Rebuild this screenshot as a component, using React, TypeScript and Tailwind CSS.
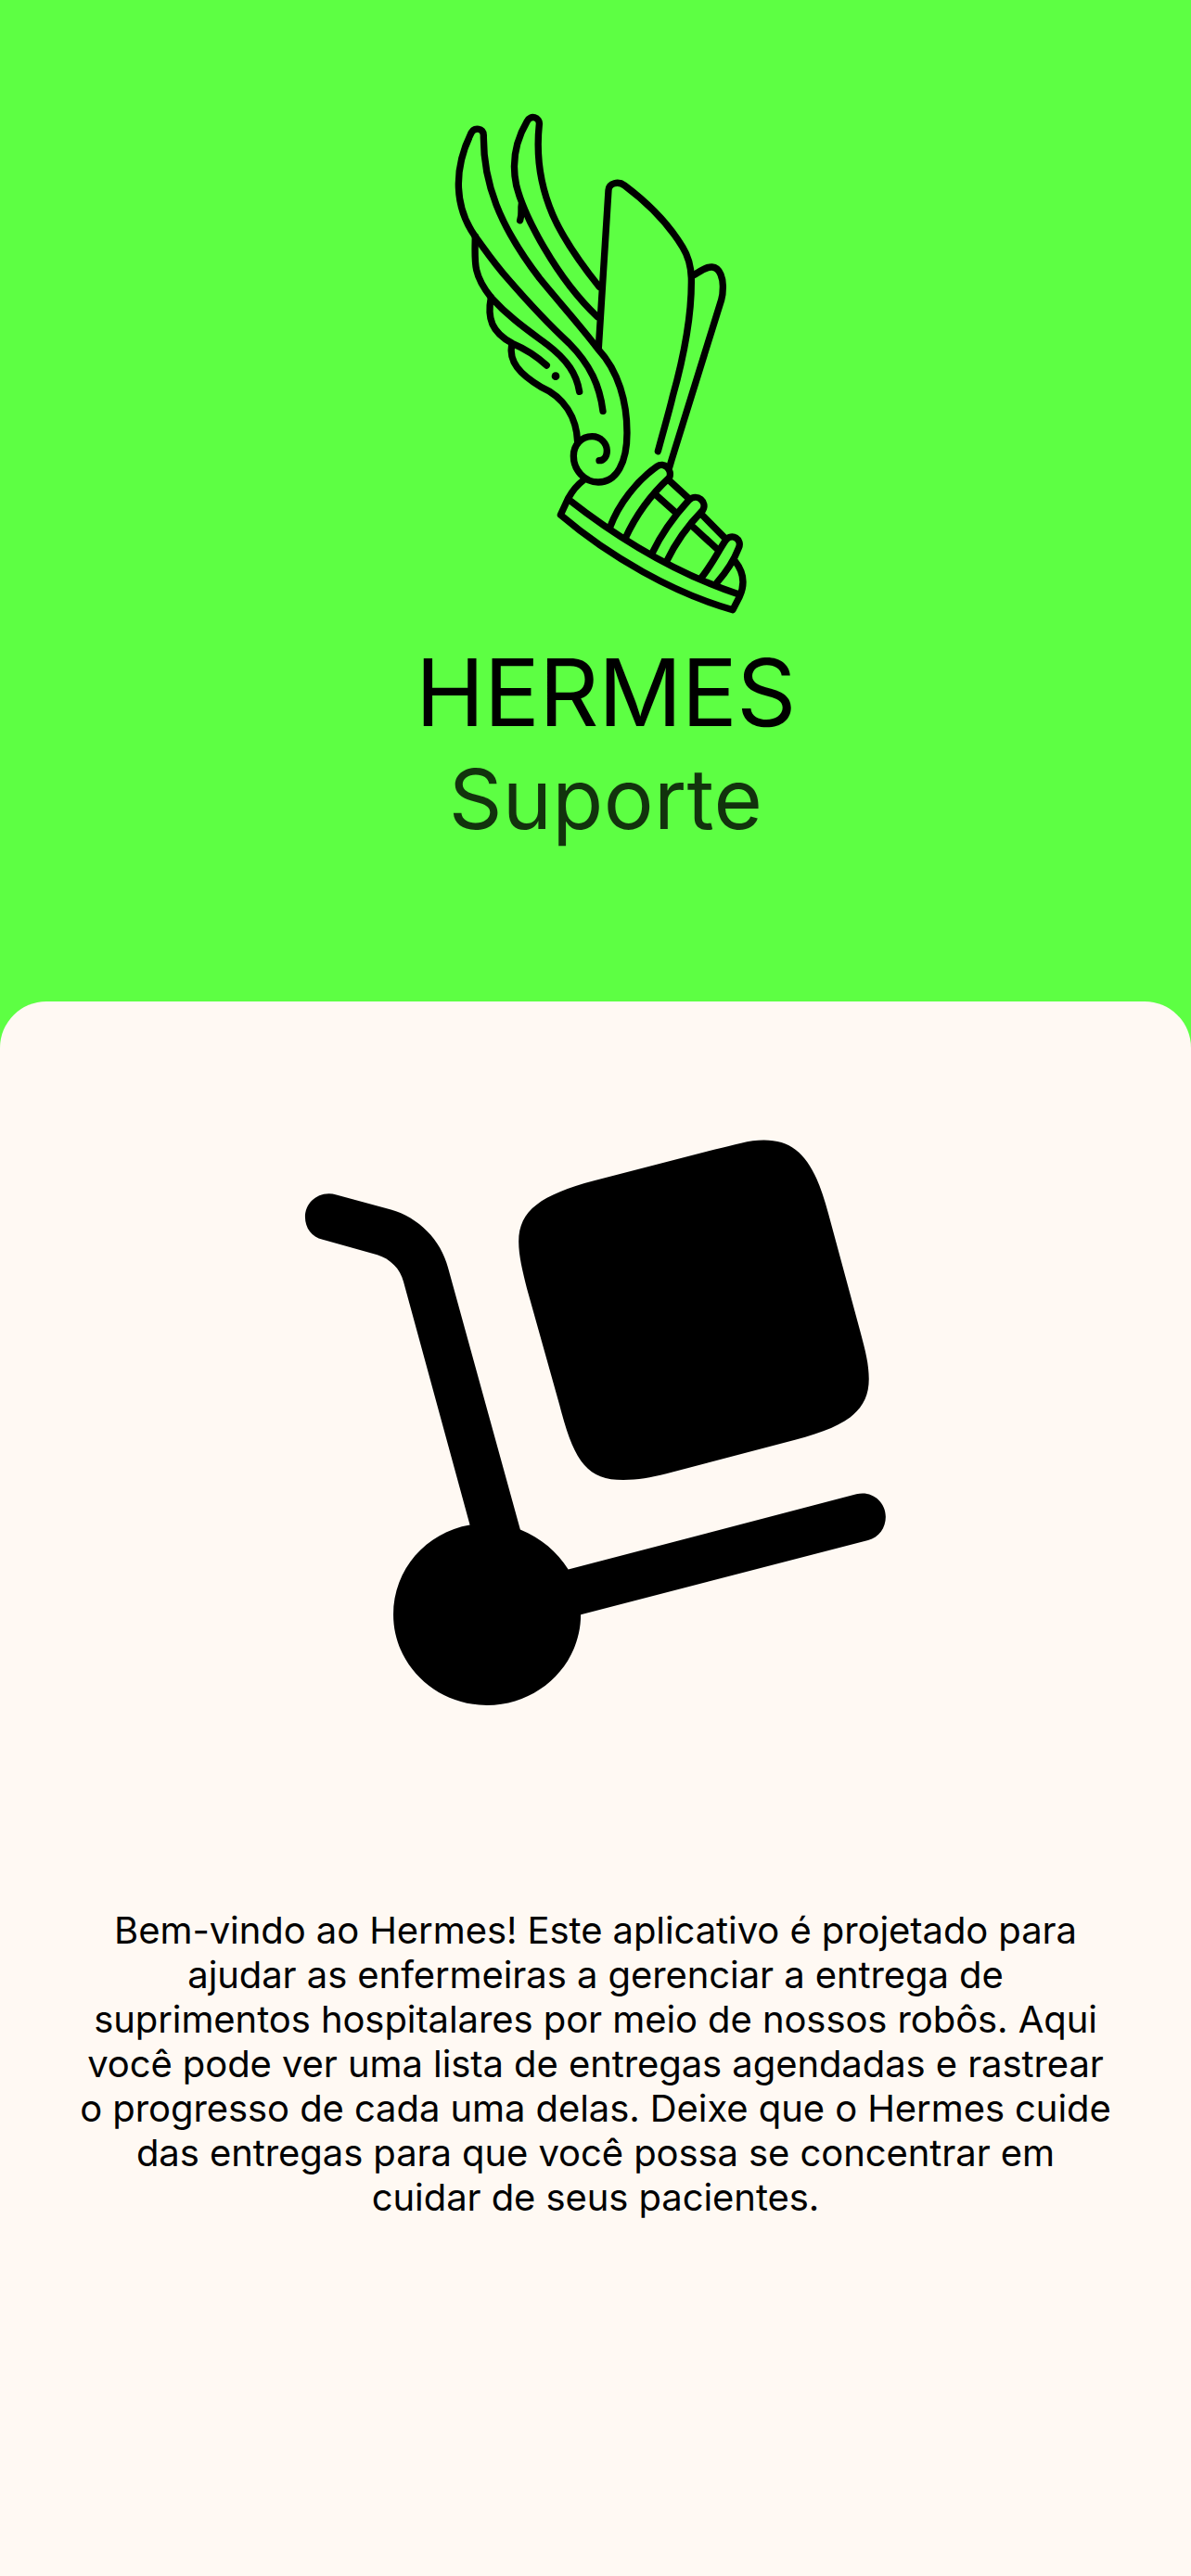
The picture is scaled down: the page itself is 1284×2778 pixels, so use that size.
function HermesLogo() {
  return (
    <svg
      className="mr-[6px] block h-[560px] w-[340px]"
      viewBox="0 0 1020 1680"
      fill="none"
      stroke="#000"
      strokeWidth="22"
      strokeLinecap="round"
      strokeLinejoin="round"
      aria-hidden="true"
    >
      {/* wing */}
      <path d="M97 435C30 340 25 220 84 100C95 80 124 85 124 107C122 260 175 400 305 570C370 650 430 715 495 800C560 870 588 970 588 1070C588 1165 555 1230 495 1230C450 1230 415 1190 415 1145C415 1110 440 1082 475 1082C503 1082 523 1105 523 1128C523 1148 512 1160 498 1160" />
      <path d="M97 435C130 480 160 525 205 575C270 650 330 715 400 780C470 850 500 920 510 1000" />
      <path d="M97 435C95 520 90 560 148 632C210 700 270 740 330 785C395 835 425 880 434 937" />
      <path d="M148 632C135 700 150 745 217 781C262 800 295 822 328 852" />
      <path d="M215 785C205 840 240 880 310 922C385 955 425 1020 428 1100" />
      <circle cx="357" cy="887" r="13" fill="#000" stroke="none" />
      <path d="M498 598C380 450 280 300 304 72C307 50 275 40 265 62C225 130 215 200 230 270C255 370 360 570 492 695" />
      <path d="M242 383C250 360 243 350 247 330L254 350" />
      {/* leg */}
      <path d="M496 795L528 285C530 262 560 255 580 270C660 330 720 390 768 470C790 505 795 540 796 570C798 700 770 830 735 955C722 1010 705 1065 688 1130" />
      <path d="M800 562C830 545 845 533 863 534C890 535 899 575 898 600C898 615 896 630 893 640L733 1155L725 1182" />
      {/* sandal */}
      <g transform="translate(330 750)">
        <path d="M118 473C95 490 80 510 68 532L43 586C200 720 410 840 600 893L622 850C640 810 635 770 607 735" />
        <path d="M68 535C240 670 430 780 620 843" />
        <path d="M202 628C230 550 290 475 355 429C378 413 405 440 395 465C330 525 285 590 252 662" />
        <path d="M338 712C375 635 415 585 458 538C485 513 520 545 502 572C455 620 415 675 385 738" />
        <path d="M500 787C530 750 555 700 577 668C597 643 632 665 619 693C603 735 575 775 548 806" />
        <path d="M398 478L455 530M500 585L572 658M350 520L412 575M472 625L548 695" />
      </g>
    </svg>
  );
}

function TrolleyIcon() {
  return (
    <svg className="mr-[4px] block size-[660px]" viewBox="0 0 1568 1568" fill="#000" aria-hidden="true">
      <path d="M125 210L265 248C335 268 393 325 411 397L596 1068C650 1090 690 1125 719 1170L1457 977C1495 967 1532 995 1532 1035C1532 1063 1515 1088 1487 1095L751 1286C751 1414 643 1518 511 1518C379 1518 271 1414 271 1286C271 1170 355 1075 467 1056L297 433C289 400 263 374 230 364L90 325C62 318 45 295 45 267C45 230 80 198 125 210Z" />
      <path d="M785 174L1095 94C1145 82 1182 70 1220 70C1310 70 1351 130 1385 258L1468 565C1480 610 1489 645 1489 682C1489 765 1430 804 1300 838L970 925C930 935 897 941 860 941C765 941 733 890 697 750L613 450C602 405 592 367 592 330C592 250 650 210 785 174Z" />
    </svg>
  );
}

export default function App() {
  return (
    <div className="flex h-[2778px] w-[1284px] flex-col overflow-hidden bg-[#5dff43] font-['Inter',sans-serif] text-black">
      <header className="flex h-[1080px] shrink-0 flex-col items-center pt-[110px] pl-[22px]">
        <HermesLogo />
        <h1 className="mt-[17px] text-[100px] leading-[120px] font-normal tracking-[-0.6px]">HERMES</h1>
        <p className="text-[90px] leading-[110px] tracking-[0.3px] text-black/80">Suporte</p>
      </header>
      <main className="flex grow flex-col items-center rounded-t-[50px] bg-[#fff9f3] pt-[120px]">
        <TrolleyIcon />
        <p className="mt-[198px] w-[1114px] text-center text-[40px] leading-[48px] tracking-[-0.08px]">
          Bem-vindo ao Hermes! Este aplicativo é projetado para ajudar as enfermeiras a gerenciar a entrega de
          suprimentos hospitalares por meio de nossos robôs. Aqui você pode ver uma lista de entregas agendadas e
          rastrear o progresso de cada uma delas. Deixe que o Hermes cuide das entregas para que você possa se
          concentrar em cuidar de seus pacientes.
        </p>
      </main>
    </div>
  );
}
